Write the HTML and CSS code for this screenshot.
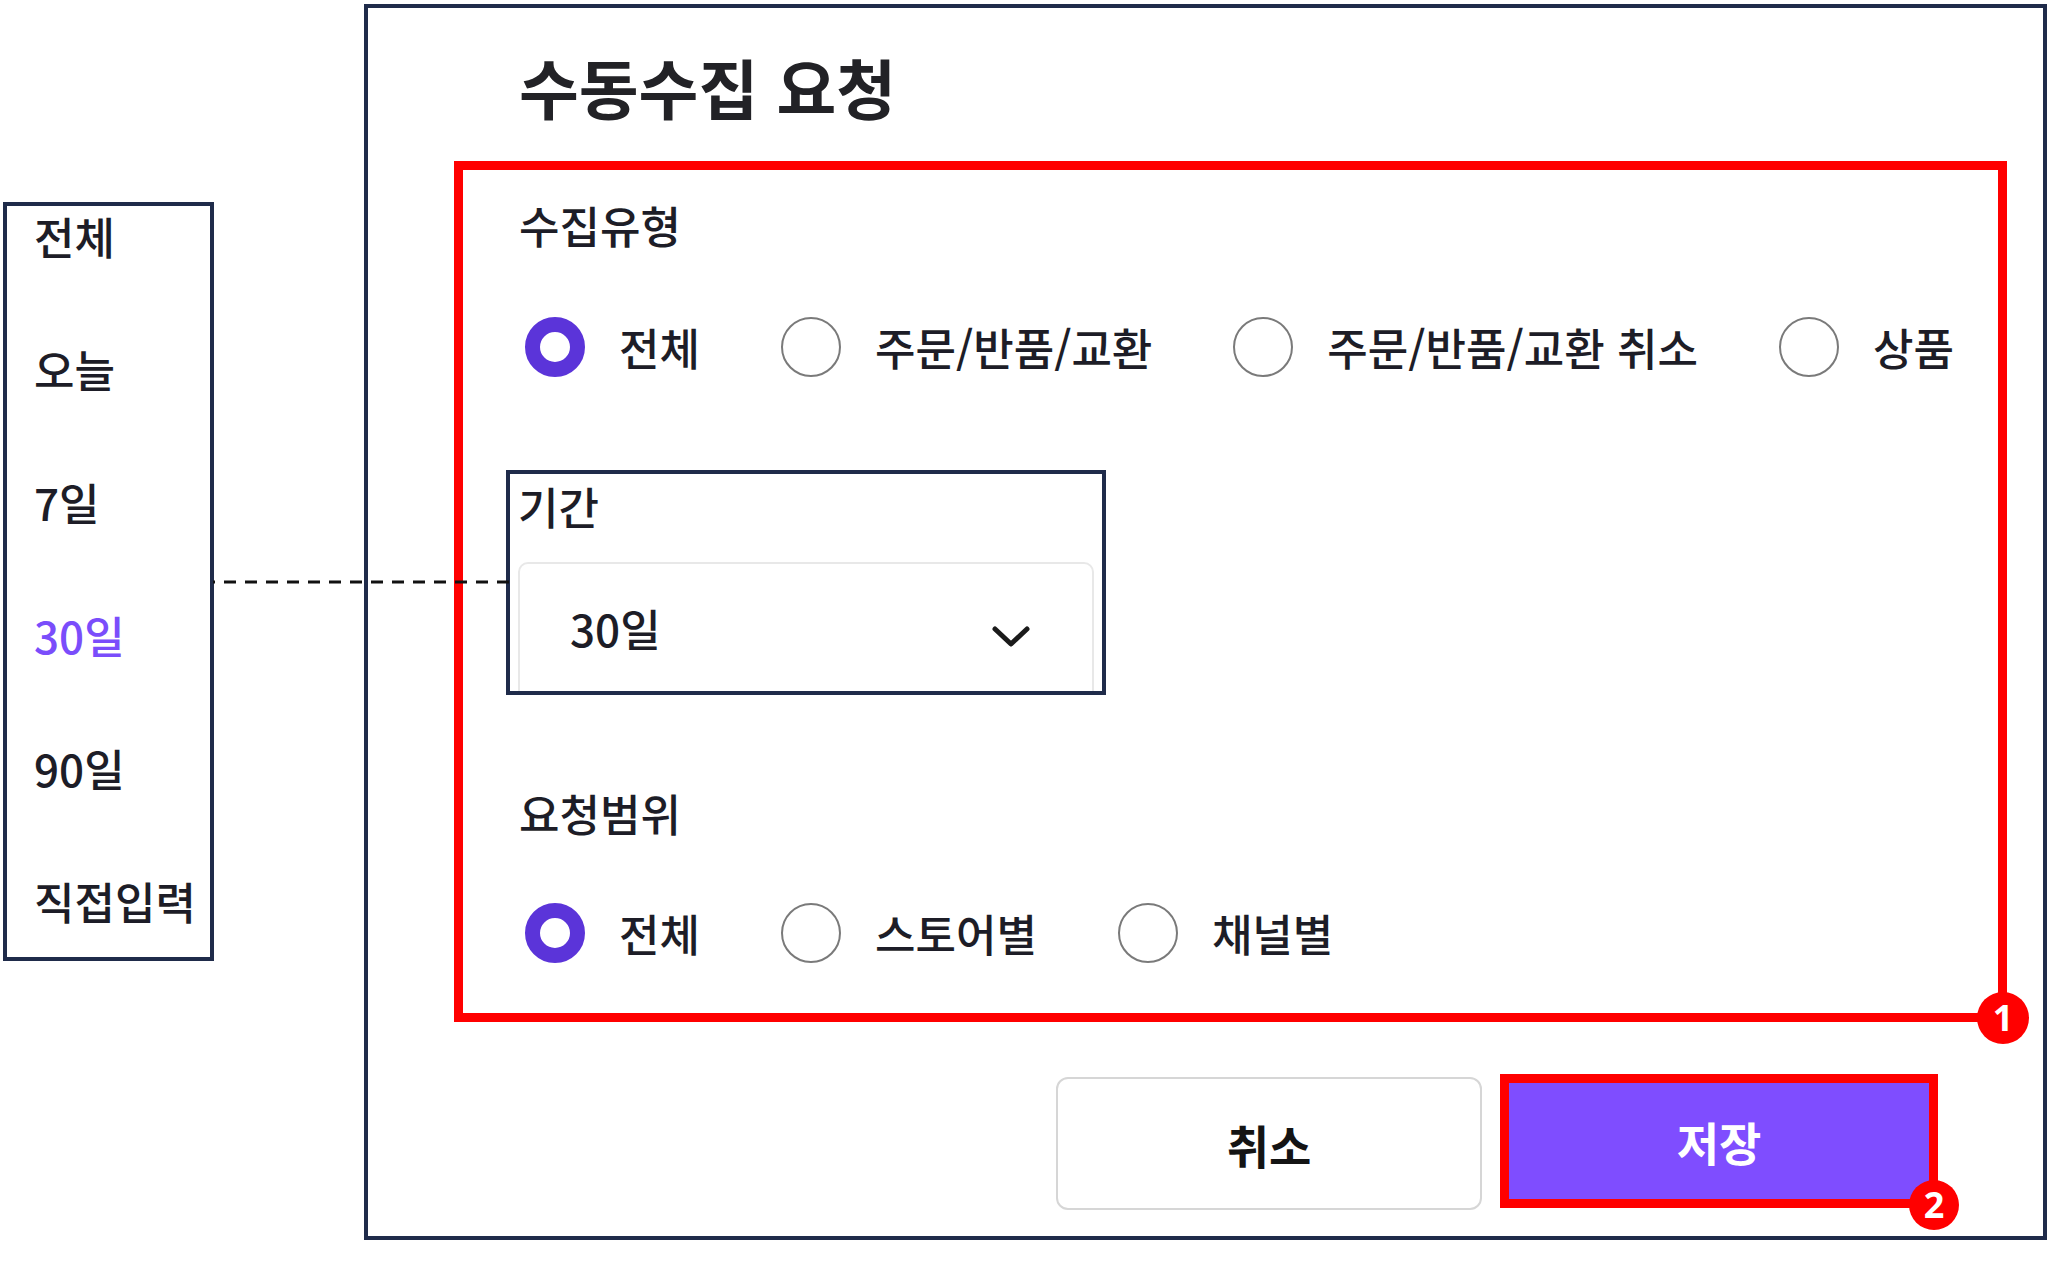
FILE: index.html
```html
<!DOCTYPE html>
<html lang="ko">
<head>
<meta charset="utf-8">
<title>수동수집 요청</title>
<link rel="stylesheet" href="styles.css">
</head>
<body>
<div class="stage">
  <ul class="period-list">
    <li>전체</li>
    <li>오늘</li>
    <li>7일</li>
    <li class="active">30일</li>
    <li>90일</li>
    <li>직접입력</li>
  </ul>

  <div class="dialog">
    <h1 class="title">수동수집 요청</h1>

    <div class="mark-box">
      <div class="field-label">수집유형</div>
      <div class="radio-row">
        <label class="radio-item"><span class="radio checked"></span><span>전체</span></label>
        <label class="radio-item"><span class="radio"></span><span>주문/반품/교환</span></label>
        <label class="radio-item"><span class="radio"></span><span>주문/반품/교환 취소</span></label>
        <label class="radio-item"><span class="radio"></span><span>상품</span></label>
      </div>

      <div class="period-box">
        <div class="period-label">기간</div>
        <div class="select">
          <span class="select-value">30일</span>
          <svg class="chevron" width="38" height="24" viewBox="0 0 38 24"><path d="M3 4 L19 19 L35 4" fill="none" stroke="#1a1a1a" stroke-width="5" stroke-linecap="round" stroke-linejoin="round"/></svg>
        </div>
      </div>

      <div class="field-label label-gap">요청범위</div>
      <div class="radio-row row-gap">
        <label class="radio-item"><span class="radio checked"></span><span>전체</span></label>
        <label class="radio-item"><span class="radio"></span><span>스토어별</span></label>
        <label class="radio-item"><span class="radio"></span><span>채널별</span></label>
      </div>
      <span class="badge badge-one">1</span>
    </div>

    <div class="button-row">
      <button class="btn btn-cancel">취소</button>
      <button class="btn btn-save">저장<span class="badge badge-two">2</span></button>
    </div>
  </div>

  <svg class="connector" width="296" height="4" viewBox="0 0 296 4"><line x1="296" y1="2" x2="0" y2="2" stroke="#111" stroke-width="3" stroke-dasharray="12 9"/></svg>
</div>
</body>
</html>
```

FILE: styles.css
```css
* { box-sizing: border-box; }

html, body {
  margin: 0;
  padding: 0;
  background: #ffffff;
}

body {
  font-family: "Noto Sans CJK KR", "Noto Sans", sans-serif;
  font-weight: 500;
  color: #1d1d27;
}

.stage {
  position: relative;
  width: 2048px;
  height: 1286px;
  display: flex;
  align-items: flex-start;
}

/* left dropdown options list */
.period-list {
  list-style: none;
  margin: 202px 0 0 3px;
  padding: 0 0 26px 27px;
  width: 211px;
  border: 4px solid #1f2b4a;
  display: flex;
  flex-direction: column;
  gap: 73px;
}

.period-list li {
  font-size: 44px;
  line-height: 60px;
  height: 60px;
  color: #1d1d27;
}

.period-list li.active {
  color: #7a4dfb;
}

/* dialog */
.dialog {
  margin: 4px 0 0 150px;
  width: 1683px;
  height: 1236px;
  border: 4px solid #1f2b4a;
  padding: 38px 36px 0 86px;
}

.title {
  margin: 0 0 35px 65px;
  font-size: 65px;
  line-height: 80px;
  height: 80px;
  font-weight: 700;
  color: #222226;
}

.mark-box {
  position: relative;
  border: 9px solid #ff0000;
  padding: 25px 0 50px 56px;
}

.field-label {
  font-size: 44px;
  line-height: 60px;
  height: 60px;
  color: #1d1d27;
}

.label-gap { margin-top: 88px; }

.radio-row {
  display: flex;
  gap: 81px;
  margin: 62px 0 0 6px;
}

.radio-row.row-gap { margin-top: 60px; }

.radio-item {
  display: flex;
  align-items: center;
  gap: 34px;
  font-size: 44px;
  line-height: 60px;
  height: 60px;
  color: #1d1d27;
}

.radio {
  width: 60px;
  height: 60px;
  border-radius: 50%;
  border: 2px solid #7a7a7a;
  flex: none;
}

.radio.checked {
  border: 15px solid #5b34d9;
}

/* period select */
.period-box {
  margin: 93px 0 0 -13px;
  width: 600px;
  height: 225px;
  border: 4px solid #1f2b4a;
  padding: 6px 8px 0 8px;
  overflow: hidden;
}

.period-label {
  font-size: 44px;
  line-height: 52px;
  height: 52px;
}

.select {
  margin-top: 30px;
  height: 150px;
  border: 2px solid #e8e8e8;
  border-radius: 10px;
  padding: 34px 62px 0 50px;
  display: flex;
  align-items: flex-start;
  justify-content: space-between;
}

.select-value {
  font-size: 44px;
  line-height: 60px;
  color: #1d1d27;
}

.chevron {
  margin-top: 27px;
}

/* buttons */
.button-row {
  display: flex;
  justify-content: flex-end;
  align-items: flex-start;
  gap: 18px;
  margin-top: 52px;
  padding-right: 69px;
}

.btn {
  font-family: "Noto Sans CJK KR", "Noto Sans", sans-serif;
  font-size: 46px;
  font-weight: 700;
  line-height: 1;
  cursor: pointer;
}

.btn-cancel {
  margin-top: 3px;
  width: 426px;
  height: 133px;
  background: #ffffff;
  color: #141414;
  border: 2px solid #d6d6d6;
  border-radius: 12px;
}

.btn-save {
  position: relative;
  width: 438px;
  height: 134px;
  background: #7f4dff;
  color: #ffffff;
  border: 9px solid #ff0000;
  border-radius: 0;
}

/* annotation badges */
.badge {
  position: absolute;
  width: 52px;
  height: 52px;
  border-radius: 50%;
  background: #ff0000;
  color: #ffffff;
  font-family: "Noto Sans", "Liberation Sans", sans-serif;
  font-weight: 700;
  font-size: 36px;
  line-height: 52px;
  text-align: center;
}

.badge-one {
  right: -31px;
  bottom: -31px;
}

.badge-two {
  width: 50px;
  height: 50px;
  line-height: 50px;
  right: -30px;
  bottom: -31px;
}

.connector {
  position: absolute;
  left: 213px;
  top: 580px;
}
```
